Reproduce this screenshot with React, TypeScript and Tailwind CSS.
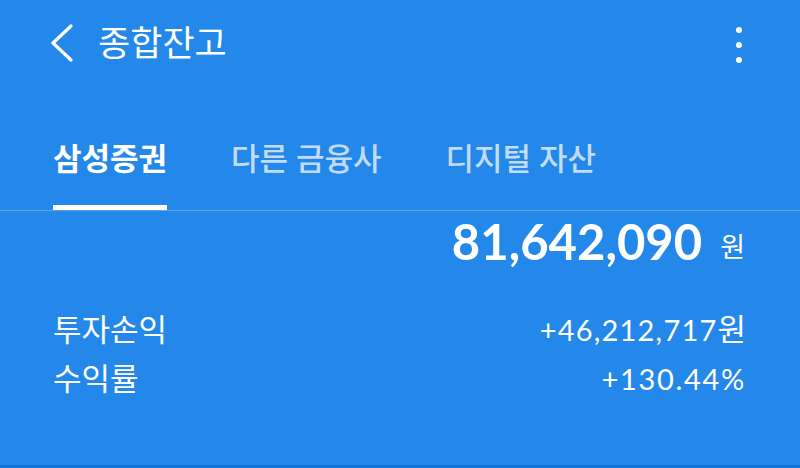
import React from 'react';

const font = { fontFamily: 'Lato, "Noto Sans CJK KR", sans-serif' };

export default function App() {
  const tabs = ['삼성증권', '다른 금융사', '디지털 자산'];

  return (
    <div className="w-[800px] h-[468px] bg-[#2488ea] text-white flex flex-col overflow-hidden" style={font}>
      {/* 상단 바 */}
      <div className="h-[84px] flex items-start pt-[24px] pl-[50px] pr-[58px]">
        <svg width="24" height="38" viewBox="0 0 24 38" fill="none" className="shrink-0">
          <polyline points="21,2 3,19 21,36" stroke="white" strokeWidth="3.2" strokeLinecap="round" strokeLinejoin="round" />
        </svg>
        <h1 className="ml-[24px] -mt-[2px] text-[35px] leading-[40px] font-normal">종합잔고</h1>
        <div className="ml-auto flex flex-col items-center gap-[9px] pt-[3px]">
          <span className="w-[6px] h-[6px] rounded-full bg-white" />
          <span className="w-[6px] h-[6px] rounded-full bg-white" />
          <span className="w-[6px] h-[6px] rounded-full bg-white" />
        </div>
      </div>

      {/* 탭 */}
      <div className="mt-[54px] border-b border-[#5aa3ee] flex gap-[64px] pl-[53px]">
        {tabs.map((t, i) => (
          <div key={t} className="flex flex-col">
            <span
              className={
                'text-[31px] leading-[40px] ' +
                (i === 0 ? 'font-bold text-white' : 'font-medium text-[#c2dcf8]')
              }
            >
              {t}
            </span>
            <div className={'mt-[27px] h-[5px] ' + (i === 0 ? 'bg-white' : 'bg-transparent')} />
          </div>
        ))}
      </div>

      {/* 총 금액 */}
      <div className="flex items-baseline justify-end pr-[55px]">
        <span className="text-[49px] leading-[60px] font-bold">81,642,090</span>
        <span className="ml-[18px] text-[27px] relative -top-[3px]">원</span>
      </div>

      {/* 상세 */}
      <div className="mt-[40px] pl-[53px] pr-[54px] flex flex-col gap-[12px] text-[31px] leading-[36px]">
        <div className="flex justify-between items-baseline">
          <span>투자손익</span>
          <span>
            <span className="text-[29px] tracking-[1.2px]">+46,212,717</span>원
          </span>
        </div>
        <div className="flex justify-between items-baseline">
          <span>수익률</span>
          <span className="text-[29px] tracking-[1.7px]">+130.44%</span>
        </div>
      </div>

      <div className="mt-auto h-[3px] bg-[#1576da]" />
    </div>
  );
}
